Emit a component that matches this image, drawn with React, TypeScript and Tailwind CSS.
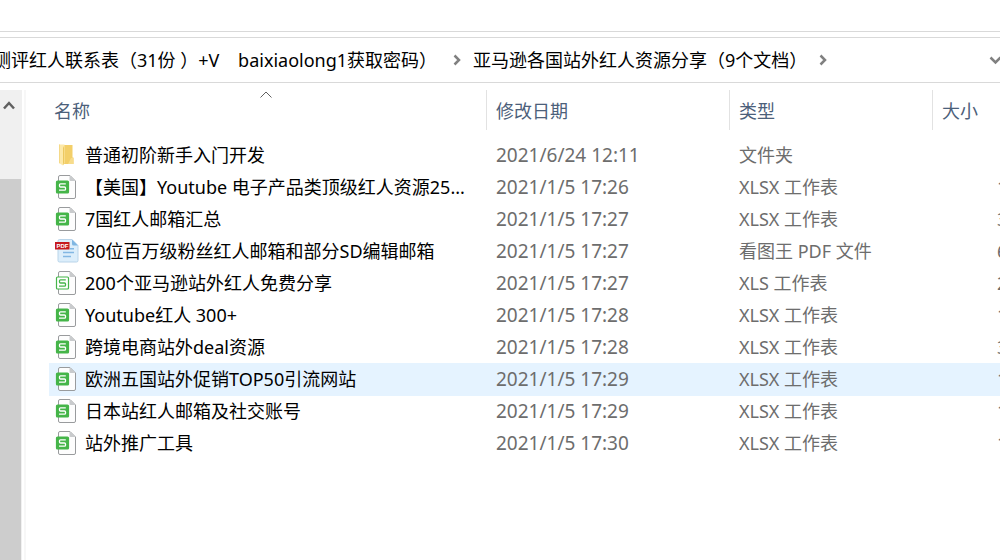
import { useState } from 'react';

type FileKind = 'folder' | 'xlsx' | 'xls' | 'pdf';

interface IFileItem {
  name: string;
  date: string;
  type: string;
  size: string;
  kind: FileKind;
}

const files: IFileItem[] = [
  { name: '普通初阶新手入门开发', date: '2021/6/24 12:11', type: '文件夹', size: '', kind: 'folder' },
  { name: '【美国】Youtube 电子产品类顶级红人资源25...', date: '2021/1/5 17:26', type: 'XLSX 工作表', size: '1', kind: 'xlsx' },
  { name: '7国红人邮箱汇总', date: '2021/1/5 17:27', type: 'XLSX 工作表', size: '3', kind: 'xlsx' },
  { name: '80位百万级粉丝红人邮箱和部分SD编辑邮箱', date: '2021/1/5 17:27', type: '看图王 PDF 文件', size: '6', kind: 'pdf' },
  { name: '200个亚马逊站外红人免费分享', date: '2021/1/5 17:27', type: 'XLS 工作表', size: '2', kind: 'xls' },
  { name: 'Youtube红人 300+', date: '2021/1/5 17:28', type: 'XLSX 工作表', size: '1', kind: 'xlsx' },
  { name: '跨境电商站外deal资源', date: '2021/1/5 17:28', type: 'XLSX 工作表', size: '3', kind: 'xlsx' },
  { name: '欧洲五国站外促销TOP50引流网站', date: '2021/1/5 17:29', type: 'XLSX 工作表', size: '1', kind: 'xlsx' },
  { name: '日本站红人邮箱及社交账号', date: '2021/1/5 17:29', type: 'XLSX 工作表', size: '1', kind: 'xlsx' },
  { name: '站外推广工具', date: '2021/1/5 17:30', type: 'XLSX 工作表', size: '1', kind: 'xlsx' },
];

function FolderIcon() {
  return (
    <svg width="24" height="24" viewBox="0 0 24 24" aria-hidden="true">
      <path d="M8 2h9.500v12.500h1V21H8z" fill="#f3cf69" />
      <path d="M16 15h2.500v6H13z" fill="#f7dc8c" />
      <path d="M4 1.500h5.500V20L8 22.500 4 20z" fill="#fde9a9" />
      <path d="M4 1.500h1V20.500L4 20z" fill="#f5d988" />
      <path d="M9 3v17l-1 2.500V5z" fill="#ecc860" />
    </svg>
  );
}

function SheetIcon({ outlined }: { outlined?: boolean }) {
  return (
    <svg width="24" height="24" viewBox="0 0 24 24" aria-hidden="true">
      <path d="M5 .5h10l5.500 5.500v16a1.500 1.500 0 0 1-1.500 1.500H5A1.500 1.500 0 0 1 3.500 22V2A1.500 1.500 0 0 1 5 .5z" fill="#fdfdfd" stroke="#999b9d" />
      <path d="M14.500 .5v4.500a1 1 0 0 0 1 1h5z" fill="#c9cbcd" />
      <rect x="1.500" y="6" width="12" height="12" rx="1" fill={outlined ? '#fff' : '#45b549'} stroke="#45b549" strokeWidth="1.200" />
      <path d="M10.800 8.800H5.500a1 1 0 0 0-1 1V11a1 1 0 0 0 1 1h4a1 1 0 0 1 1 1v1.200a1 1 0 0 1-1 1H4" fill="none" stroke={outlined ? '#45b549' : '#fff'} strokeWidth="1.300" />
    </svg>
  );
}

function PdfIcon() {
  return (
    <svg width="24" height="24" viewBox="0 0 24 24" aria-hidden="true">
      <path d="M4.500 .5h12.500l6 6v15a1.500 1.500 0 0 1-1.500 1.500h-17A1.500 1.500 0 0 1 3 21.500V2A1.500 1.500 0 0 1 4.500 .5z" fill="#dceefb" stroke="#b9d4e9" />
      <path d="M17 .5v4.500A1.500 1.500 0 0 0 18.500 6.500H23z" fill="#7fb6e2" />
      <path d="M15 9.800h4M8 13.500h11M8 17.500h8" stroke="#82b7e3" strokeWidth="1.500" />
      <rect x="0" y="3" width="14.500" height="7.500" fill="#c61a1e" />
      <text x="1.500" y="9" fontSize="6" fontWeight="700" fill="#fff" fontFamily="Liberation Sans, sans-serif">PDF</text>
    </svg>
  );
}

function FileIcon({ kind }: { kind: FileKind }) {
  if (kind === 'folder') return <FolderIcon />;
  if (kind === 'pdf') return <PdfIcon />;
  return <SheetIcon outlined={kind === 'xls'} />;
}

function CrumbArrow() {
  return (
    <svg width="8" height="12" viewBox="0 0 8 12" className="shrink-0" aria-hidden="true">
      <path d="M1.500 1.500L6 6l-4.500 4.500" fill="none" stroke="#808080" strokeWidth="2.500" />
    </svg>
  );
}

export default function App() {
  const [selected, setSelected] = useState(7);

  return (
    <div className="flex h-screen flex-col overflow-hidden bg-white font-['Noto_Sans','Noto_Sans_CJK_SC',sans-serif] text-lg leading-6 text-black">
      <div className="h-8 shrink-0 border-b border-[#d9d9d9]" />
      <nav className="mt-[5px] flex h-[46px] shrink-0 items-center border-y border-[#d9d9d9] whitespace-nowrap">
        <button type="button" className="-ml-[7px] shrink-0 whitespace-pre">测评红人联系表（31份 ）+V    baixiaolong1获取密码）</button>
        <span className="ml-4"><CrumbArrow /></span>
        <button type="button" className="ml-3 shrink-0">亚马逊各国站外红人资源分享（9个文档）</button>
        <span className="ml-3"><CrumbArrow /></span>
        <button type="button" aria-label="展开" className="-mr-0.5 ml-auto shrink-0 pt-0.5">
          <svg width="13" height="10" viewBox="0 0 13 10">
            <path d="M1.500 1.500l5 5 5-5" fill="none" stroke="#808080" strokeWidth="2.500" />
          </svg>
        </button>
      </nav>

      <div className="mt-[7px] flex min-h-0 flex-1">
        <div className="flex w-[22px] shrink-0 flex-col bg-[#f0f0f0]">
          <button type="button" aria-label="向上滚动" className="flex h-[89px] shrink-0 justify-center pt-2.5 pr-1">
            <svg width="12" height="10" viewBox="0 0 12 10">
              <path d="M1 8.500l5-5.500 5 5.500" fill="none" stroke="#606060" strokeWidth="2.500" />
            </svg>
          </button>
          <div className="mr-px flex-1 bg-[#cdcdcd]" />
        </div>
        <div className="ml-0.5 w-0.5 shrink-0 bg-[#f7f7f7]" />

        <div className="ml-[23px] min-w-0 flex-1 overflow-hidden">
          <table className="w-full min-w-[951px] table-fixed border-collapse text-left whitespace-nowrap">
            <colgroup>
              <col className="w-[438px]" />
              <col className="w-[243px]" />
              <col className="w-[203px]" />
              <col />
            </colgroup>
            <thead>
              <tr className="h-[49px] align-top text-[#4c607a]">
                <th className="relative p-0 font-normal">
                  <div className="flex h-10 items-center border-r border-[#e2e2e2] pt-0.5 pl-[5px]">
                    <button type="button">名称</button>
                  </div>
                  <svg width="12" height="7" viewBox="0 0 12 7" className="absolute top-px left-[211px]">
                    <path d="M.5 6.500L6 1l5.500 5.500" fill="none" stroke="#606060" />
                  </svg>
                </th>
                <th className="p-0 font-normal">
                  <div className="flex h-10 items-center border-r border-[#e2e2e2] pt-0.5 pl-[9px]">
                    <button type="button">修改日期</button>
                  </div>
                </th>
                <th className="p-0 font-normal">
                  <div className="flex h-10 items-center border-r border-[#e2e2e2] pt-0.5 pl-[9px]">
                    <button type="button">类型</button>
                  </div>
                </th>
                <th className="p-0 font-normal">
                  <div className="flex h-10 items-center pt-0.5 pl-[9px]">
                    <button type="button">大小</button>
                  </div>
                </th>
              </tr>
            </thead>
            <tbody>
              {files.map((file, index) => (
                <tr
                  key={file.name}
                  onClick={() => setSelected(index)}
                  className={index === selected ? 'h-8 bg-[#e5f3ff] text-[#6d6d6d] shadow-[0_1px_0_#e5f3ff]' : 'h-8 text-[#6d6d6d]'}
                >
                  <td className="p-0">
                    <div className="flex items-center gap-1.5 pl-1.5 text-black">
                      <FileIcon kind={file.kind} />
                      <span>{file.name}</span>
                    </div>
                  </td>
                  <td className="p-0 pl-[9px] text-[19px]">{file.date}</td>
                  <td className="p-0 pl-[9px]">{file.type}</td>
                  <td className="p-0 pl-16">{file.size}</td>
                </tr>
              ))}
            </tbody>
          </table>
        </div>
      </div>
    </div>
  );
}
